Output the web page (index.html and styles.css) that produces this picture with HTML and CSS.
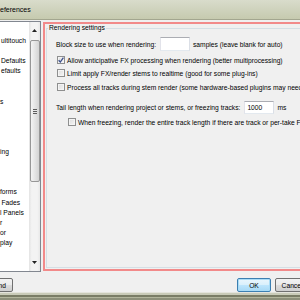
FILE: index.html
```html
<!DOCTYPE html>
<html lang="en">
<head>
    <meta charset="UTF-8">
    <title>REAPER Preferences</title>
    <link rel="stylesheet" href="styles.css">
</head>
<body>
    <div class="window">
        <div class="titlebar"><span class="title">eferences</span></div>

        <div class="dialog">
            <div class="main">
                <!-- Preferences tree (scrolled, only the tail of each label shows) -->
                <div class="tree">
                    <ul class="tree-items">
                        <li>ultitouch</li>
                        <li></li>
                        <li>Defaults</li>
                        <li>efaults</li>
                        <li></li>
                        <li></li>
                        <li class="flush">s</li>
                        <li></li>
                        <li></li>
                        <li></li>
                        <li></li>
                        <li class="flush">ing</li>
                        <li></li>
                        <li></li>
                        <li></li>
                        <li class="flush">forms</li>
                        <li class="shift">Fades</li>
                        <li class="flush">l Panels</li>
                        <li class="flush">r</li>
                        <li class="flush">or</li>
                        <li class="flush">play</li>
                    </ul>
                    <div class="scrollbar">
                        <div class="sb-btn">
                            <svg width="5" height="3" viewBox="0 0 5 3"><path d="M0 3 L2.5 0 L5 3 Z" fill="#222"/></svg>
                        </div>
                        <div class="sb-track">
                            <div class="sb-thumb"><span class="grip"></span></div>
                        </div>
                        <div class="sb-btn">
                            <svg width="5" height="3" viewBox="0 0 5 3"><path d="M0 0 L5 0 L2.5 3 Z" fill="#222"/></svg>
                        </div>
                    </div>
                </div>

                <!-- Rendering page, with the red highlight round it -->
                <div class="highlight">
                    <fieldset class="group">
                        <legend>Rendering settings</legend>
                        <div class="settings">
                            <div class="row block-row">
                                <span>Block size to use when rendering:</span>
                                <span class="field block-field"></span>
                                <span>samples (leave blank for auto)</span>
                            </div>
                            <div class="row check-row first">
                                <span class="checkbox checked">
                                    <svg width="6" height="6" viewBox="0 0 6 6"><path d="M0.6 3.2 L2.3 5 L5.4 0.6" fill="none" stroke="#3b4f8c" stroke-width="1.3"/></svg>
                                </span>
                                <span>Allow anticipative FX processing when rendering (better multiprocessing)</span>
                            </div>
                            <div class="row check-row second">
                                <span class="checkbox"></span>
                                <span>Limit apply FX/render stems to realtime (good for some plug-ins)</span>
                            </div>
                            <div class="row check-row third">
                                <span class="checkbox"></span>
                                <span>Process all tracks during stem render (some hardware-based plugins may need this)</span>
                            </div>
                            <div class="row tail-row">
                                <span>Tail length when rendering project or stems, or freezing tracks:</span>
                                <span class="field tail-field">1000</span>
                                <span>ms</span>
                            </div>
                            <div class="row check-row freeze">
                                <span class="checkbox"></span>
                                <span>When freezing, render the entire track length if there are track or per-take FX</span>
                            </div>
                        </div>
                    </fieldset>
                </div>
            </div>

            <div class="buttons">
                <button class="btn find">Find</button>
                <span class="spacer"></span>
                <button class="btn default">OK</button>
                <button class="btn">Cancel</button>
            </div>
        </div>

        <div class="frame-bottom"></div>
    </div>
</body>
</html>
```

FILE: styles.css
```css
body {
    margin: 0;
    font-family: "Liberation Sans", Arial, sans-serif;
    font-size: 6.7px;
    color: #000;
    background-color: #f0f0f0;
    overflow: hidden;
}

.window {
    display: flex;
    flex-direction: column;
    width: 300px;
    height: 300px;
    overflow: hidden;
}

.titlebar {
    height: 19px;
    flex-shrink: 0;
    display: flex;
    align-items: center;
    background: linear-gradient(#d9dccb, #cdd1ba 60%, #c6caaf);
    border-bottom: 1px solid #a3a68f;
}

.title {
    font-size: 7px;
    line-height: 8px;
    margin-top: 1px;
}

.dialog {
    flex: 1;
    display: flex;
    flex-direction: column;
    padding-top: 1px;
    background-color: #f0f0f0;
}

.main {
    display: flex;
    align-items: flex-start;
    height: 251px;
}

/* tree */
.tree {
    display: flex;
    width: 41px;
    height: 251px;
    box-sizing: border-box;
    flex-shrink: 0;
    background-color: #fff;
    border: 1px solid #828790;
    border-left: none;
}

.tree-items {
    list-style: none;
    margin: 0;
    padding: 14px 0 0 0;
    width: 29px;
    overflow: hidden;
    white-space: nowrap;
}

.tree-items li {
    height: 10.1px;
    line-height: 10.1px;
    padding-left: 1px;
}

.tree-items li.flush {
    padding-left: 0;
}

.tree-items li.shift {
    padding-left: 1.5px;
}

.scrollbar {
    width: 11px;
    display: flex;
    flex-direction: column;
    background: linear-gradient(to right, #e3e3e3, #f3f3f3 25%, #f3f3f3 75%, #e8e8e8);
}

.sb-btn {
    height: 17px;
    display: flex;
    align-items: center;
    justify-content: center;
}

.sb-btn svg {
    display: block;
}

.sb-track {
    flex: 1;
    padding-top: 1px;
}

.sb-thumb {
    height: 142px;
    margin: 0 0.5px;
    box-sizing: border-box;
    border: 1px solid #979797;
    border-radius: 2px;
    background: linear-gradient(to right, #f4f4f4, #e6e6e6 45%, #d4d4d4);
    display: flex;
    align-items: center;
    justify-content: center;
}

.grip {
    width: 4px;
    height: 5px;
    background: repeating-linear-gradient(#5c5c5c 0, #5c5c5c 1px, #e8e8e8 1px, #e8e8e8 2px);
}

/* red highlight and group box */
.highlight {
    flex: 1;
    margin: 1px -12px 0 2px;
    height: 249px;
    box-sizing: border-box;
    border: 2px solid #f28a8a;
}

.group {
    margin: 0 0 0 1px;
    height: 244px;
    box-sizing: border-box;
    padding: 0 0 0 1px;
    border: 1px solid #d5dfe5;
    min-width: 0;
}

.group legend {
    padding: 0 1px;
    line-height: 8px;
}

.settings {
    padding: 5px 0 0 8px;
    white-space: nowrap;
}

.row {
    display: flex;
    align-items: center;
}

.block-row {
    height: 14px;
}

.check-row {
    height: 10px;
}

.check-row.first {
    margin-top: 4px;
}

.check-row.second {
    margin-top: 3px;
}

.check-row.third {
    margin-top: 4px;
}

.tail-row {
    height: 14px;
    margin-top: 8px;
}

.check-row.freeze {
    margin-top: 3px;
    padding-left: 11px;
}

.field {
    display: flex;
    align-items: center;
    width: 30px;
    height: 14px;
    box-sizing: border-box;
    padding-left: 2px;
    background-color: #fff;
    border: 1px solid #abadb3;
    border-color: #abadb3 #dbdfe6 #e3e9ef #e2e3ea;
}

.block-field {
    margin: 0 3px 0 4px;
}

.tail-field {
    height: 13px;
    margin: 0 3px 0 4px;
}

.checkbox {
    width: 8px;
    height: 8px;
    box-sizing: border-box;
    flex-shrink: 0;
    margin: 0 2px 0 1px;
    border: 1px solid #8e8f8f;
    background: linear-gradient(135deg, #dcdcdc, #f6f6f6);
    box-shadow: inset 0 0 0 1px #f4f4f4;
    display: flex;
    align-items: center;
    justify-content: center;
}

.checkbox svg {
    display: block;
}

/* bottom buttons */
.buttons {
    display: flex;
    align-items: center;
    height: 14px;
    margin: 6px -9px 0 0;
}

.spacer {
    flex: 1;
}

.btn {
    font-family: inherit;
    font-size: 6.7px;
    color: #000;
    width: 34px;
    height: 14px;
    padding: 0;
    box-sizing: border-box;
    border: 1px solid #707070;
    border-radius: 2px;
    background: linear-gradient(#f2f2f2, #ebebeb 50%, #dddddd 50%, #cfcfcf);
}

.btn.find {
    width: 27px;
    margin-left: -14px;
}

.btn.default {
    border-color: #3c7fb1;
    background: linear-gradient(#eaf6fd, #d9f0fc 50%, #bee6fd 50%, #a7d9f5);
    box-shadow: inset 0 0 0 1px #a9dcf6;
    margin-right: 4px;
}

.frame-bottom {
    height: 8px;
    flex-shrink: 0;
    background: linear-gradient(#e4e4dc 0, #e4e4dc 1px, #c9cbb8 1px, #c9cbb8 3px, #7a7d66 3px, #7a7d66 5px, #b1b49b 5px, #b1b49b 6px, #8d907a 6px);
}
```
